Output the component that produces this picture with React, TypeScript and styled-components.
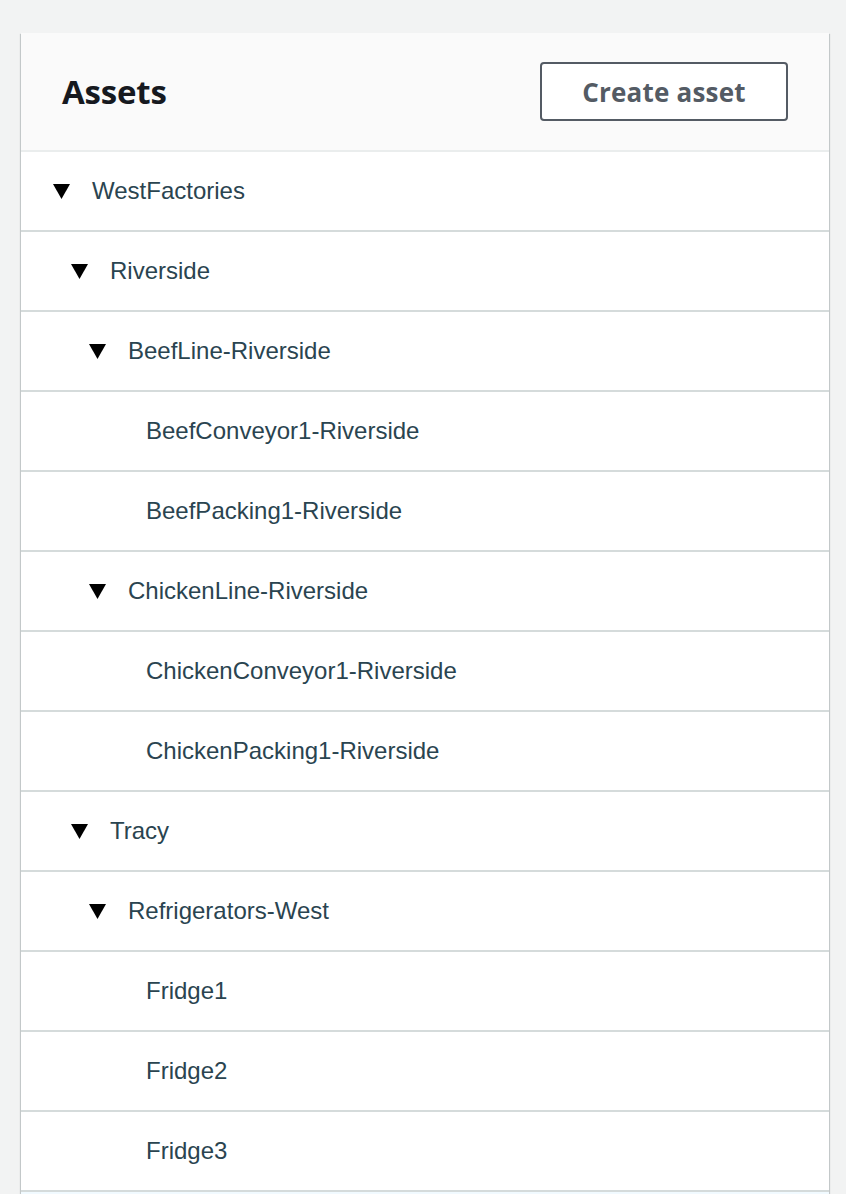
import React from 'react';
import styled, { createGlobalStyle } from 'styled-components';

type Node = { name: string; level: number; open?: boolean; selected?: boolean };

const nodes: Node[] = [
  { name: 'WestFactories', level: 0, open: true },
  { name: 'Riverside', level: 1, open: true },
  { name: 'BeefLine-Riverside', level: 2, open: true },
  { name: 'BeefConveyor1-Riverside', level: 3 },
  { name: 'BeefPacking1-Riverside', level: 3 },
  { name: 'ChickenLine-Riverside', level: 2, open: true },
  { name: 'ChickenConveyor1-Riverside', level: 3 },
  { name: 'ChickenPacking1-Riverside', level: 3 },
  { name: 'Tracy', level: 1, open: true },
  { name: 'Refrigerators-West', level: 2, open: true },
  { name: 'Fridge1', level: 3 },
  { name: 'Fridge2', level: 3 },
  { name: 'Fridge3', level: 3 },
  { name: 'Fridge4', level: 3, selected: true },
];

const Global = createGlobalStyle`
  html, body {
    margin: 0;
    background: #f2f3f3;
  }
  body {
    font-family: "Liberation Sans", Arial, sans-serif;
    overflow: hidden;
  }
`;

const Page = styled.div`
  padding: 33px 0 0 21px;
  height: 1194px;
  box-sizing: border-box;
  overflow: hidden;
`;

const Panel = styled.section`
  width: 808px;
  background: #fff;
  box-shadow: 0 1px 1px 0 rgba(0, 28, 36, 0.3), 1px 1px 1px 0 rgba(0, 28, 36, 0.15),
    -1px 1px 1px 0 rgba(0, 28, 36, 0.15);
`;

const Header = styled.header`
  height: 117px;
  background: #fafafa;
  border-bottom: 2px solid #eaeded;
  display: flex;
  align-items: center;
  justify-content: space-between;
  padding: 0 41px;
`;

const Title = styled.h2`
  margin: 0;
  font-family: "Open Sans", sans-serif;
  font-weight: 700;
  font-size: 33px;
  color: #16191f;
  letter-spacing: -0.2px;
`;

const Button = styled.button`
  width: 248px;
  height: 59px;
  border: 2px solid #545b64;
  border-radius: 4px;
  background: #fff;
  color: #545b64;
  font-family: "Open Sans", sans-serif;
  font-weight: 700;
  font-size: 26px;
  letter-spacing: 0.2px;
  padding: 0 0 0 0;
  line-height: 1;
  cursor: pointer;
`;

const List = styled.ul`
  list-style: none;
  margin: 0;
  padding: 0;
`;

const Row = styled.li<{ $level: number; $selected?: boolean }>`
  height: 78px;
  border-bottom: 2px solid #d5dbdb;
  display: flex;
  align-items: center;
  padding-left: ${(p) => 71 + p.$level * 18}px;
  color: #2a4450;
  font-size: 24px;
  background: ${(p) => (p.$selected ? '#f1faff' : '#fff')};
`;

const Caret = styled.svg`
  width: 17px;
  height: 15px;
  margin-left: -39px;
  margin-right: 22px;
  flex: none;
`;

export default function App() {
  return (
    <>
      <Global />
      <Page>
        <Panel>
          <Header>
            <Title>Assets</Title>
            <Button>Create asset</Button>
          </Header>
          <List>
            {nodes.map((n) => (
              <Row key={n.name} $level={n.level} $selected={n.selected}>
                {n.open && (
                  <Caret viewBox="0 0 17 15">
                    <path d="M0 0 H17 L8.5 15 Z" fill="#000" />
                  </Caret>
                )}
                {n.name}
              </Row>
            ))}
          </List>
        </Panel>
      </Page>
    </>
  );
}
